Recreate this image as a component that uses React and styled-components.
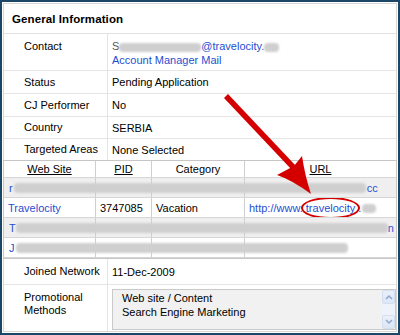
import React from "react";
import styled, { createGlobalStyle } from "styled-components";

const Global = createGlobalStyle`
  html, body { margin: 0; padding: 0; background: #fff; }
  body { font-family: "Liberation Sans", Arial, sans-serif; font-size: 11px; color: #000; }
`;

const Frame = styled.div`
  position: relative;
  width: 400px;
  height: 335px;
  box-sizing: border-box;
  border: 2px solid #1b4666;
  padding: 1px;
  background: #fff;
`;

const Panel = styled.div`
  height: 100%;
  box-sizing: border-box;
  border: 1px solid #d6d6d6;
  display: flex;
  flex-direction: column;
`;

const Header = styled.div`
  height: 30px;
  box-sizing: border-box;
  border-bottom: 1px solid #e2e2e2;
  padding-left: 8px;
  display: flex;
  align-items: center;
  font-weight: bold;
  font-size: 11.5px;
  letter-spacing: 0.1px;
`;

const InfoRow = styled.div`
  display: grid;
  grid-template-columns: 104px 1fr;
  height: ${(p) => p.$h}px;
  flex: ${(p) => (p.$fill ? "1" : "none")};
  box-sizing: border-box;
  border-bottom: ${(p) => (p.$last ? "none" : "1px solid #e6e6e6")};
`;

const Label = styled.div`
  padding-left: 20px;
  padding-top: ${(p) => (p.$top ? "6px" : "0")};
  border-right: 1px solid #e4e4e4;
  display: flex;
  align-items: ${(p) => (p.$top ? "flex-start" : "center")};
  line-height: 13px;
`;

const Value = styled.div`
  padding-left: 4px;
  padding-top: ${(p) => (p.$top ? "5px" : "0")};
  display: flex;
  flex-direction: ${(p) => (p.$top ? "column" : "row")};
  align-items: ${(p) => (p.$top ? "flex-start" : "center")};
  line-height: 14px;
`;

const Link = styled.span`
  color: #1f4fd1;
`;

const Faded = styled.span`
  color: #555;
`;

const Smudge = styled.span`
  display: inline-block;
  width: ${(p) => p.$w}px;
  height: ${(p) => p.$h || 9}px;
  background: #cfcfcf;
  border-radius: 4px;
  filter: blur(1px);
  vertical-align: middle;
  margin: 0 ${(p) => p.$m || 0}px;
`;

const Table = styled.div`
  margin: 0 -1px;
  border: 1px solid #c6c6c6;
  height: 99px;
  box-sizing: border-box;
`;

const TRow = styled.div`
  position: relative;
  display: grid;
  grid-template-columns: 92px 56px 93px 1fr;
  height: ${(p) => p.$h}px;
  box-sizing: border-box;
  border-bottom: 1px solid #d6d6d6;
  background: ${(p) => (p.$shade ? "#efefef" : "#fff")};
`;

const Cell = styled.div`
  border-right: ${(p) => (p.$end ? "none" : "1px solid #cfcfcf")};
  display: flex;
  align-items: center;
  justify-content: ${(p) => (p.$center ? "center" : "flex-start")};
  padding-left: ${(p) => (p.$center ? "0" : "4px")};
  white-space: nowrap;
  overflow: hidden;
`;

const HeadText = styled.span`
  text-decoration: underline;
`;

const Redaction = styled.div`
  position: absolute;
  inset: 0;
  display: flex;
  align-items: center;
  padding-left: 5px;
`;

const Ellipse = styled.span`
  display: inline-block;
  border: 2px solid #d40000;
  border-radius: 50%;
  padding: 3px 3px;
  margin: -5px -2px;
`;

const TextBox = styled.div`
  margin: 4px 0 1px 4px;
  display: flex;
  border: 1px solid #c9c9c9;
  background: #f1f1f1;
  height: 41px;
  box-sizing: border-box;
`;

const BoxText = styled.div`
  flex: 1;
  padding: 1px 9px;
  line-height: 14px;
`;

const ScrollBar = styled.div`
  width: 13px;
  display: flex;
  flex-direction: column;
  background: #f3f6fb;
`;

const ScrollBtn = styled.div`
  height: 14px;
  display: flex;
  align-items: center;
  justify-content: center;
  background: linear-gradient(#eaf0fa, #dce6f6);
  border: 1px solid #d3deef;
  border-radius: 2px;
  box-sizing: border-box;
`;

const Track = styled.div`
  flex: 1;
  background: #eef3fb;
`;

const Overlay = styled.svg`
  position: absolute;
  left: -2px;
  top: -2px;
  pointer-events: none;
`;

const Chevron = ({ up }) => (
  <svg width="8" height="6" viewBox="0 0 8 6">
    <path
      d={up ? "M1 5 L4 2 L7 5" : "M1 1 L4 4 L7 1"}
      fill="none"
      stroke="#8fa6cc"
      strokeWidth="1.5"
    />
  </svg>
);

export default function App() {
  return (
    <>
      <Global />
      <Frame>
        <Panel>
          <Header>General Information</Header>
          <InfoRow $h={37}>
            <Label $top>Contact</Label>
            <Value $top>
              <span>
                <Faded>S</Faded>
                <Smudge $w={82} />
                <Link>@travelocity.</Link>
                <Smudge $w={15} />
              </span>
              <Link>Account Manager Mail</Link>
            </Value>
          </InfoRow>
          <InfoRow $h={23}>
            <Label>Status</Label>
            <Value>Pending Application</Value>
          </InfoRow>
          <InfoRow $h={23}>
            <Label>CJ Performer</Label>
            <Value>No</Value>
          </InfoRow>
          <InfoRow $h={22}>
            <Label>Country</Label>
            <Value>SERBIA</Value>
          </InfoRow>
          <InfoRow $h={21} $last>
            <Label>Targeted Areas</Label>
            <Value>None Selected</Value>
          </InfoRow>
          <Table>
            <TRow $h={17}>
              <Cell $center><HeadText>Web Site</HeadText></Cell>
              <Cell $center><HeadText>PID</HeadText></Cell>
              <Cell $center>Category</Cell>
              <Cell $center $end><HeadText>URL</HeadText></Cell>
            </TRow>
            <TRow $h={20} $shade>
              <Cell /><Cell /><Cell /><Cell $end />
              <Redaction>
                <Link>r</Link>
                <Smudge $w={352} $h={10} $m={1} />
                <Link>cc</Link>
              </Redaction>
            </TRow>
            <TRow $h={20}>
              <Cell><Link>Travelocity</Link></Cell>
              <Cell>3747085</Cell>
              <Cell>Vacation</Cell>
              <Cell $end>
                <Link>
                  http://www.<Ellipse>travelocity</Ellipse>.<Smudge $w={14} $m={1} />
                </Link>
              </Cell>
            </TRow>
            <TRow $h={20} $shade>
              <Cell /><Cell /><Cell /><Cell $end />
              <Redaction>
                <Link>T</Link>
                <Smudge $w={372} $h={10} $m={0} />
                <Link>n</Link>
              </Redaction>
            </TRow>
            <TRow $h={20}>
              <Cell /><Cell /><Cell /><Cell $end />
              <Redaction>
                <Link>J</Link>
                <Smudge $w={332} $h={10} $m={1} />
              </Redaction>
            </TRow>
          </Table>
          <InfoRow $h={26}>
            <Label>Joined Network</Label>
            <Value>11-Dec-2009</Value>
          </InfoRow>
          <InfoRow $fill $last>
            <Label $top>Promotional<br />Methods</Label>
            <div>
              <TextBox>
                <BoxText>
                  Web site / Content
                  <br />
                  Search Engine Marketing
                </BoxText>
                <ScrollBar>
                  <ScrollBtn><Chevron up /></ScrollBtn>
                  <Track />
                  <ScrollBtn><Chevron /></ScrollBtn>
                </ScrollBar>
              </TextBox>
            </div>
          </InfoRow>
        </Panel>
        <Overlay width="400" height="335" viewBox="0 0 400 335">
          <line x1="226" y1="96" x2="294" y2="168" stroke="#d40000" strokeWidth="5.5" strokeLinecap="butt" />
          <path
            d="M311 194 Q292 180 277 175 L294 166 L302 156 Q305 176 311 194 Z"
            fill="#d40000"
          />
        </Overlay>
      </Frame>
    </>
  );
}
